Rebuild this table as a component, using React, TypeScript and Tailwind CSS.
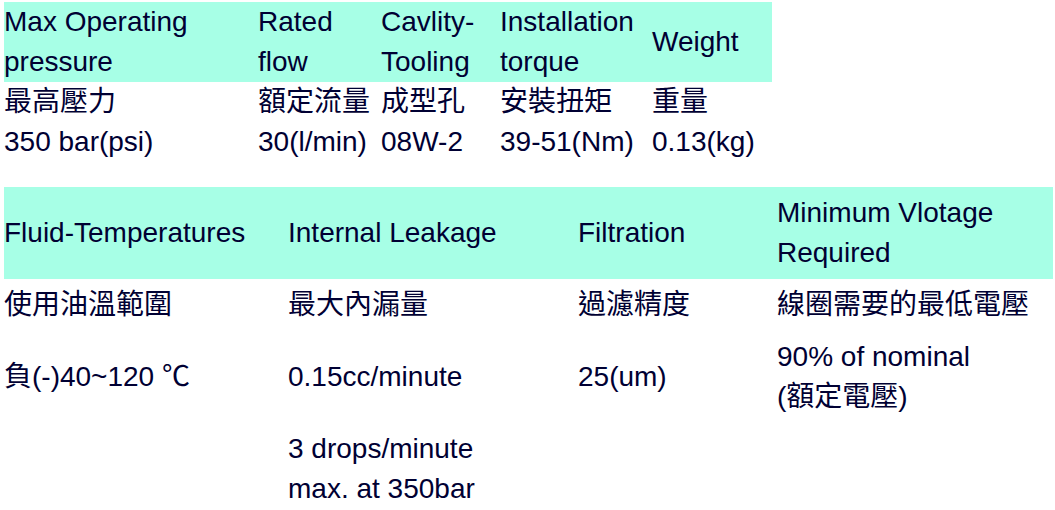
const font = {
  fontFamily: '"Liberation Sans", Arial, "Noto Sans CJK TC", sans-serif',
};

const specs = [
  {
    head: ["Max Operating pressure"],
    zh: "最高壓力",
    value: "350 bar(psi)",
  },
  { head: ["Rated flow"], zh: "額定流量", value: "30(l/min)" },
  { head: ["Cavlity-Tooling"], zh: "成型孔", value: "08W-2" },
  { head: ["Installation torque"], zh: "安裝扭矩", value: "39-51(Nm)" },
  { head: ["Weight"], zh: "重量", value: "0.13(kg)" },
];

const widths1 = ["w-[254px]", "w-[123px]", "w-[119px]", "w-[152px]", "w-[120px]"];
const widths2 = ["w-[284px]", "w-[290px]", "w-[199px]", "w-[276px]"];

const App = () => {
  return (
    <div
      className="pl-[4px] pt-[2px] bg-white text-[#000033] text-[28px] leading-[40px]"
      style={font}
    >
      {/* top spec table */}
      <table className="table-fixed w-[768px]">
        <colgroup>
          {widths1.map((w) => (
            <col key={w} className={w} />
          ))}
        </colgroup>
        <tbody>
          <tr className="bg-[#a7ffe6]">
            {specs.map((s) => (
              <td key={s.zh} className="p-0 align-middle">
                {s.head}
              </td>
            ))}
          </tr>
          <tr>
            {specs.map((s) => (
              <td key={s.zh} className="p-0 align-middle">
                {s.zh}
              </td>
            ))}
          </tr>
          <tr>
            {specs.map((s) => (
              <td key={s.zh} className="p-0 align-middle whitespace-nowrap">
                {s.value}
              </td>
            ))}
          </tr>
        </tbody>
      </table>

      {/* second table */}
      <table className="table-fixed w-[1049px] mt-[25px]">
        <colgroup>
          {widths2.map((w) => (
            <col key={w} className={w} />
          ))}
        </colgroup>
        <tbody>
          <tr className="bg-[#a7ffe6]">
            <td className="px-0 py-[6px] align-middle">Fluid-Temperatures</td>
            <td className="px-0 py-[6px] align-middle">Internal Leakage</td>
            <td className="px-0 py-[6px] align-middle">Filtration</td>
            <td className="px-0 py-[6px] align-middle">Minimum Vlotage Required</td>
          </tr>
          <tr>
            <td className="px-0 py-[6px] align-middle">使用油溫範圍</td>
            <td className="px-0 py-[6px] align-middle">最大內漏量</td>
            <td className="px-0 py-[6px] align-middle">過濾精度</td>
            <td className="px-0 py-[6px] align-middle">線圈需要的最低電壓</td>
          </tr>
          <tr>
            <td className="px-0 py-[6px] align-middle">負(-)40~120 ℃</td>
            <td className="px-0 py-[6px] align-middle">0.15cc/minute</td>
            <td className="px-0 py-[6px] align-middle">25(um)</td>
            <td className="px-0 py-[6px] align-middle">
              90% of nominal
              <br />
              (額定電壓)
            </td>
          </tr>
          <tr>
            <td className="px-0 py-[6px] align-middle"></td>
            <td className="px-0 py-[6px] align-middle">
              3 drops/minute
              <br />
              max. at 350bar
            </td>
            <td className="px-0 py-[6px] align-middle"></td>
            <td className="px-0 py-[6px] align-middle"></td>
          </tr>
        </tbody>
      </table>
    </div>
  );
};

export default App;
